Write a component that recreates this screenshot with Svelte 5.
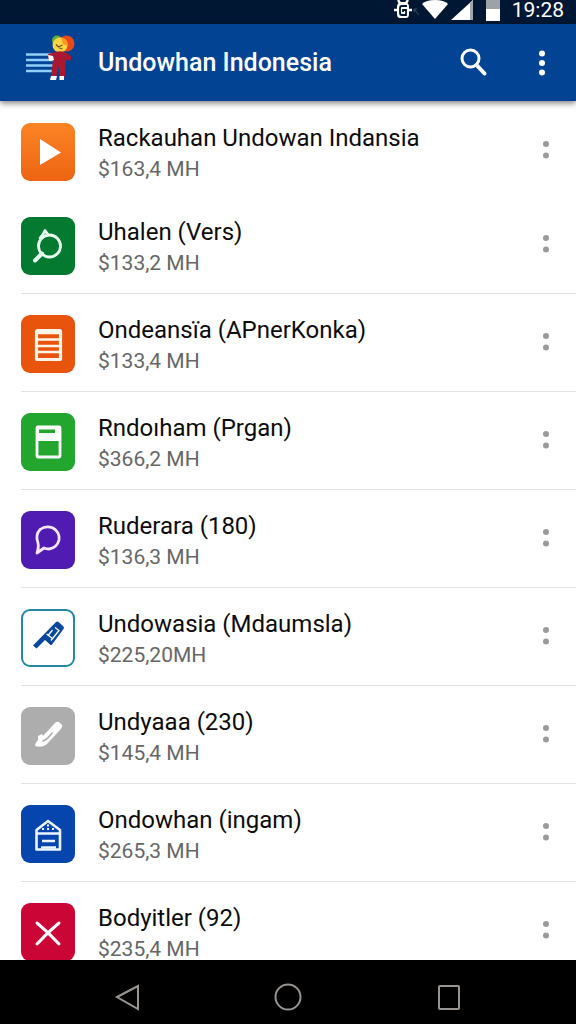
<script>
  const apps = [
    { name: 'Rackauhan Undowan Indansia', size: '$163,4 MH', icon: 'play' },
    { name: 'Uhalen (Vers)', size: '$133,2 MH', icon: 'loupe' },
    { name: 'Ondeansïa (APnerKonka)', size: '$133,4 MH', icon: 'list' },
    { name: 'Rndoıham (Prgan)', size: '$366,2 MH', icon: 'panel' },
    { name: 'Ruderara (180)', size: '$136,3 MH', icon: 'chat' },
    { name: 'Undowasia (Mdaumsla)', size: '$225,20MH', icon: 'tool' },
    { name: 'Undyaaa (230)', size: '$145,4 MH', icon: 'pen' },
    { name: 'Ondowhan (ingam)', size: '$265,3 MH', icon: 'house' },
    { name: 'Bodyitler (92)', size: '$235,4 MH', icon: 'cross' }
  ];
</script>

<div class="screen">
  <div class="status">
    <svg class="robot" viewBox="0 0 28 20" width="28" height="20" aria-hidden="true">
      <path d="M5 6Q6 2 9 2H13Q16 2 17 6V14Q17 18 14 18H8Q5 18 5 14Z" fill="#fff" />
      <path d="M2 10H20M8 3L6 0M14 3L16 0" stroke="#fff" stroke-width="2.4" />
      <path d="M15 6H10Q8 6 8 8V13Q8 15 10 15H14V10H11V12" fill="none" stroke="#001733" stroke-width="1.800" />
      <path d="M22 9L27 15M22 9V12M22 9H25" stroke="#3b5268" stroke-width="1" fill="none" />
    </svg>
    <svg class="wifi" viewBox="0 0 26 20" width="26" height="20" aria-hidden="true">
      <path d="M0 4Q4 0 13 0T26 4L13 19Z" fill="#fff" />
    </svg>
    <svg class="signal" viewBox="0 0 22 20" width="22" height="20" aria-hidden="true">
      <path d="M0 20L22 0V20Z" fill="#fff" />
      <path d="M19 3L22 0V20H19Z" fill="#a2a8b0" />
    </svg>
    <svg class="battery" viewBox="0 0 14 21" width="14" height="21" aria-hidden="true">
      <path d="M0 0H14V9H0Z" fill="#9ea2a8" />
      <path d="M0 9H14V21H0Z" fill="#fff" />
    </svg>
    <time>19:28</time>
  </div>

  <header>
    <svg class="logo" viewBox="0 0 50 48" width="50" height="48" aria-hidden="true">
      <path d="M0 20.500H26M0 26H28M0 31.500H28M0 37H27" stroke="#8fd0ff" stroke-width="2.400" />
      <circle cx="40.500" cy="9.500" r="8" fill="#e8491b" />
      <circle cx="31" cy="6.500" r="5" fill="#67ad36" />
      <circle cx="34" cy="11" r="7.500" fill="#f8d544" />
      <path d="M35 3.500Q43 5 41.500 12L37 10Z" fill="#f79a24" />
      <path d="M30 10.500L32.500 13L36.500 11M33.500 14L36.500 15" stroke="#75561c" stroke-width="1.300" fill="none" />
      <path d="M26 19Q33 16 39 18L45 22V26.500L40 26L39 43H33.500L33 32L30 43H25L27 26L22 25V20Z" fill="#a91731" />
      <path d="M22 21L27 22L28 26L23 27Z" fill="#fff" />
      <path d="M25 42H31L30 46H24ZM33.500 42H38V46H33.500Z" fill="#fff" />
    </svg>
    <h1>Undowhan Indonesia</h1>
    <button class="search" aria-label="Search">
      <svg viewBox="0 0 28 30" width="28" height="30">
        <circle cx="10.500" cy="10.500" r="8.500" fill="none" stroke="#fff" stroke-width="3" />
        <path d="M16.500 17L24.500 25.500" stroke="#fff" stroke-width="4" stroke-linecap="round" />
      </svg>
    </button>
    <button class="overflow" aria-label="More options">
      <svg viewBox="0 0 6 28" width="6" height="28" fill="#fff">
        <circle cx="3" cy="4.500" r="3" /><circle cx="3" cy="14" r="3" /><circle cx="3" cy="23.500" r="3" />
      </svg>
    </button>
  </header>

  <main>
    <ul>
      {#each apps as app}
        <li>
          <span class="tile {app.icon}">
            <svg viewBox="0 0 54 58" width="54" height="58" fill="none" aria-hidden="true">
              {#if app.icon === 'play'}
                <path d="M19 16L40 29.500L19 42Z" fill="#fff" />
              {:else if app.icon === 'loupe'}
                <circle cx="28.500" cy="29" r="11" stroke="#e9fff0" stroke-width="2.800" />
                <path d="M18.500 22Q22 18 24 13.500L27.500 18.500" stroke="#e9fff0" stroke-width="2.800" stroke-linejoin="round" />
                <path d="M21 36.500L14 43.500" stroke="#e9fff0" stroke-width="4" stroke-linecap="round" />
              {:else if app.icon === 'list'}
                <rect x="15.500" y="15.500" width="24" height="29" rx="1" stroke="#fff4e8" stroke-width="3.200" />
                <path d="M17 18H39M17 24.500H39M17 31H39M17 37H39" stroke="#fff4e8" stroke-width="2.600" />
              {:else if app.icon === 'panel'}
                <rect x="16" y="14" width="23" height="30" rx="1" stroke="#fff" stroke-width="2.800" />
                <path d="M16 14H39V28H16Z" fill="#fff" />
                <path d="M18 16.500H34V20H18Z" fill="#23a62d" />
              {:else if app.icon === 'chat'}
                <path d="M17 32Q14 24 19 18.500Q25 14 32 17Q39 21 38 29Q36 37 28 38Q25 38 23 37L16 42Q18 36 17 32Z" stroke="#f7e6ff" stroke-width="2.800" stroke-linejoin="round" />
              {:else if app.icon === 'tool'}
                <path d="M12 36.500L35 13Q36 12 37.500 13L42.500 17.500Q43.500 18.500 42.500 20L31 35.500Q30 36.500 29 35.500L24 31L15.500 39.500Z" fill="#07479c" />
                <path d="M34 18.500L38 21.500L30 31.500M25.500 25L31.500 29.500M31.500 21L27.500 26" stroke="#fff" stroke-width="1.300" />
              {:else if app.icon === 'pen'}
                <path d="M33 17Q36 13 39 16L41 18Q42 20 39 23L26 37Q22 41 14 39Q14 36 17 33L17 29L21 27L22 29Z" fill="#fff" />
                <path d="M22 34Q27 32 31 26" stroke="#adadad" stroke-width="1.600" stroke-linecap="round" />
              {:else if app.icon === 'house'}
                <path d="M15.500 44.500V25L27 16L39 25V44.500Z" stroke="#eaf5ff" stroke-width="2.600" stroke-linejoin="round" />
                <path d="M16 28.500H38M21 36H34M20 42.500H35" stroke="#eaf5ff" stroke-width="2.400" />
                <path d="M21 24H23M26 24H28M31 24H33M26 20.500H28" stroke="#eaf5ff" stroke-width="2" />
              {:else}
                <path d="M16 20Q27 29 38 41M38 20Q27 29 16 41" stroke="#fff" stroke-width="3" stroke-linecap="round" />
              {/if}
            </svg>
          </span>
          <div class="text">
            <h2>{app.name}</h2>
            <p>{app.size}</p>
          </div>
          <button class="more" aria-label="Options for {app.name}">
            <svg viewBox="0 0 6 20" width="6" height="20" fill="#9a9a9a">
              <circle cx="3" cy="4" r="3" /><circle cx="3" cy="15.500" r="3" />
            </svg>
          </button>
        </li>
      {/each}
    </ul>
  </main>

  <nav>
    <button aria-label="Back">
      <svg viewBox="0 0 26 28" width="26" height="28"><path d="M3 14L24 3V26Z" /></svg>
    </button>
    <button aria-label="Home">
      <svg viewBox="0 0 28 28" width="28" height="28"><circle cx="14" cy="14" r="12.500" /></svg>
    </button>
    <button aria-label="Recent apps">
      <svg viewBox="0 0 26 28" width="26" height="28"><rect x="3" y="3" width="20" height="23" rx="1" /></svg>
    </button>
  </nav>
</div>

<style>
  :global(body) {
    margin: 0;
  }
  .screen {
    display: flex;
    flex-direction: column;
    height: 100vh;
    background: #fff;
    font-family: Roboto, sans-serif;
    overflow: hidden;
  }
  button {
    display: flex;
    align-items: center;
    justify-content: center;
    padding: 0;
    border: 0;
    background: none;
    cursor: pointer;
  }
  svg {
    display: block;
    flex: none;
  }
  .status {
    display: flex;
    flex: none;
    align-items: flex-start;
    justify-content: flex-end;
    height: 24px;
    padding-right: 12px;
    background: #001733;
    color: #fff;
  }
  .wifi {
    margin-left: 2px;
  }
  .signal {
    margin-left: 3px;
  }
  .battery {
    margin-left: 13px;
  }
  time {
    margin-left: 12px;
    font-size: 21px;
    line-height: 21px;
  }
  header {
    display: flex;
    flex: none;
    align-items: center;
    height: 77px;
    padding-left: 26px;
    background: #034394;
    color: #fff;
    box-shadow: 0 2px 6px #0008;
    z-index: 1;
  }
  .logo {
    margin-bottom: 10px;
  }
  h1 {
    flex: 1;
    margin: 0 0 0 22px;
    font-size: 25px;
    font-weight: 500;
    line-height: 32px;
  }
  .search,
  .overflow {
    width: 68px;
    height: 56px;
  }
  main {
    flex: 1;
    min-height: 0;
    overflow: hidden;
  }
  ul {
    margin: 0;
    padding: 0 0 0 21px;
    list-style: none;
  }
  li {
    display: flex;
    align-items: flex-start;
    padding: 21px 0 18px;
    border-bottom: 1px solid #e2e2e2;
  }
  li:first-child {
    padding: 22px 0 15px;
    border: 0;
  }
  .tile {
    flex: none;
    width: 54px;
    height: 58px;
    border-radius: 9px;
    overflow: hidden;
  }
  .play {
    background: linear-gradient(#fb8425, #ed6412);
  }
  .loupe {
    background: #047a30;
  }
  .list {
    background: #e9540d;
  }
  .panel {
    background: #23a62d;
  }
  .chat {
    background: #4f1bb0;
  }
  .tool {
    background: #fff;
    box-shadow: inset 0 0 0 2px #2487a8;
  }
  .pen {
    background: #adadad;
  }
  .house {
    background: #0644ae;
  }
  .cross {
    background: #cb0636;
  }
  .text {
    flex: 1;
    min-width: 0;
    margin: 0 0 -4px 23px;
  }
  h2,
  p {
    margin: 0;
    line-height: 31px;
    white-space: nowrap;
  }
  h2 {
    color: #0c0c0c;
    font-size: 24px;
    font-weight: 400;
  }
  p {
    color: #666;
    font-size: 21px;
  }
  .more {
    width: 60px;
    height: 54px;
  }
  nav {
    display: flex;
    flex: none;
    align-items: center;
    justify-content: center;
    height: 64px;
    padding-top: 10px;
    box-sizing: border-box;
    background: #000;
  }
  nav button {
    width: 28%;
    height: 54px;
  }
  nav svg {
    fill: none;
    stroke: #999490;
    stroke-width: 2;
  }
</style>
